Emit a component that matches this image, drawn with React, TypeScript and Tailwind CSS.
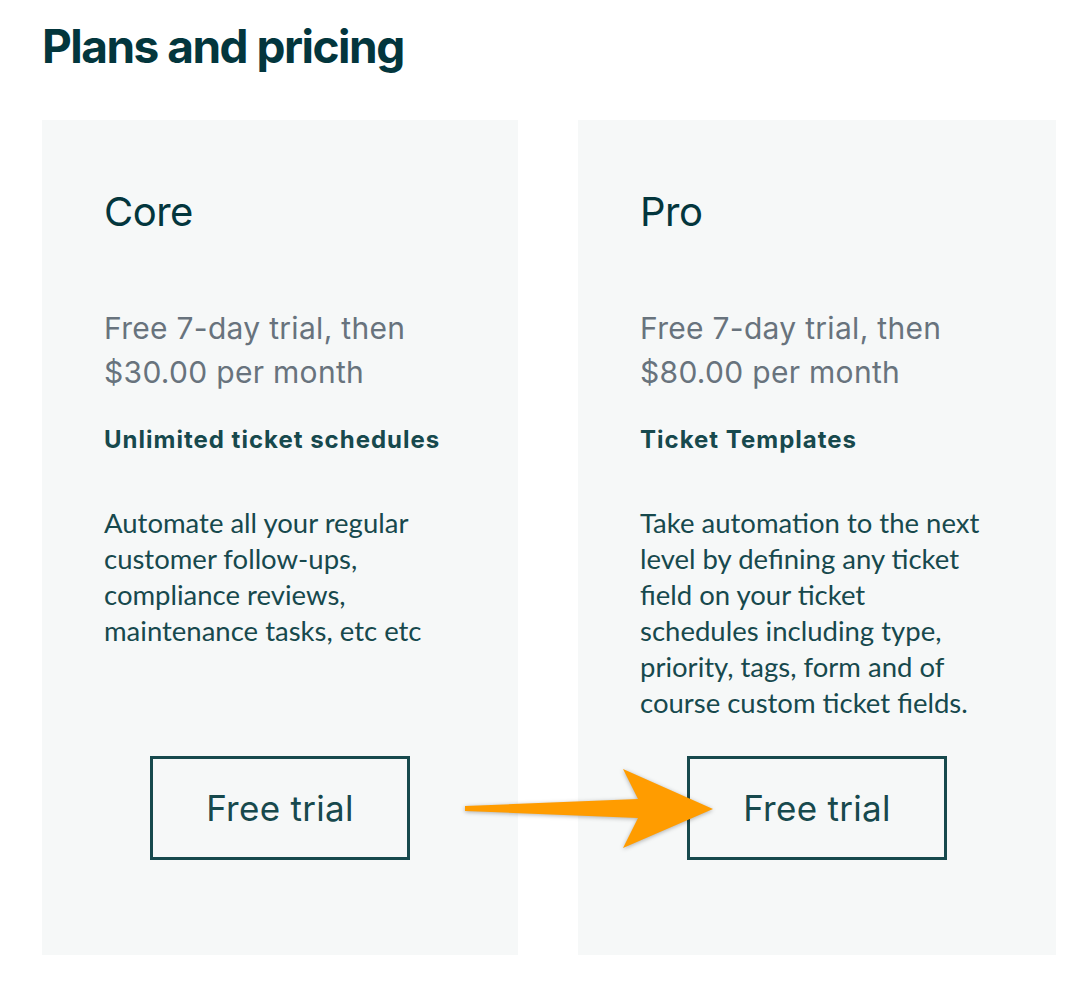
import React from "react";

interface Plan {
  name: string;
  price: string;
  feature: string;
  description: string;
}

const plans: Plan[] = [
  {
    name: "Core",
    price: "$30.00",
    feature: "Unlimited ticket schedules",
    description:
      "Automate all your regular customer follow-ups, compliance reviews, maintenance tasks, etc etc",
  },
  {
    name: "Pro",
    price: "$80.00",
    feature: "Ticket Templates",
    description:
      "Take automation to the next level by defining any ticket field on your ticket schedules including type, priority, tags, form and of course custom ticket fields.",
  },
];

const PlanCard: React.FC<{ plan: Plan }> = ({ plan }) => {
  return (
    <div className="flex flex-col bg-[#f6f8f8] pl-[62px] pr-[30px] pt-[72px] pb-[95px]">
      {/* Plan name */}
      <h2 className="font-['Inter',sans-serif] text-[40px] leading-[40px] font-normal text-[#03363d] tracking-[-0.5px]">
        {plan.name}
      </h2>

      {/* Price */}
      <p className="mt-[74px] font-['Inter',sans-serif] text-[30px] leading-[44px] text-[#68737d] tracking-[0.3px]">
        Free 7-day trial, then
        <br />
        {plan.price} per month
      </p>

      {/* Feature */}
      <h3 className="mt-[32px] font-['Inter',sans-serif] text-[24px] leading-[28px] font-bold text-[#17494d] tracking-[1px]">
        {plan.feature}
      </h3>

      {/* Description */}
      <p className="mt-[51px] w-[343px] font-['Lato',sans-serif] text-[27.5px] leading-[36px] text-[#17494d]">
        {plan.description}
      </p>

      {/* Button */}
      <div className="mt-auto pt-[35px] pr-[32px] flex justify-center">
        <button
          type="button"
          className="w-[260px] h-[104px] border-[3px] border-[#17494d] font-['Inter',sans-serif] text-[35px] text-[#17494d] tracking-[0.3px]"
        >
          Free trial
        </button>
      </div>
    </div>
  );
};

const App: React.FC = () => {
  return (
    <div className="relative min-h-[1004px] w-[1090px] bg-white pl-[42px] pt-[23px]">
      <h1 className="font-['Inter',sans-serif] text-[46px] leading-[46px] font-bold text-[#03363d] tracking-[-1.5px]">
        Plans and pricing
      </h1>

      <div className="mt-[51px] grid grid-cols-[476px_478px] gap-[60px]">
        {plans.map((plan) => (
          <PlanCard key={plan.name} plan={plan} />
        ))}
      </div>

      {/* Annotation arrow */}
      <svg
        className="absolute left-[460px] top-[760px] drop-shadow-[0_1px_2px_rgba(0,0,0,0.3)]"
        width="260"
        height="96"
        viewBox="460 760 260 96"
      >
        <polygon
          points="465,806 638,799 623,769 713,809 623,848 638,818 465,811"
          fill="#ff9c00"
        />
      </svg>
    </div>
  );
};

export default App;
